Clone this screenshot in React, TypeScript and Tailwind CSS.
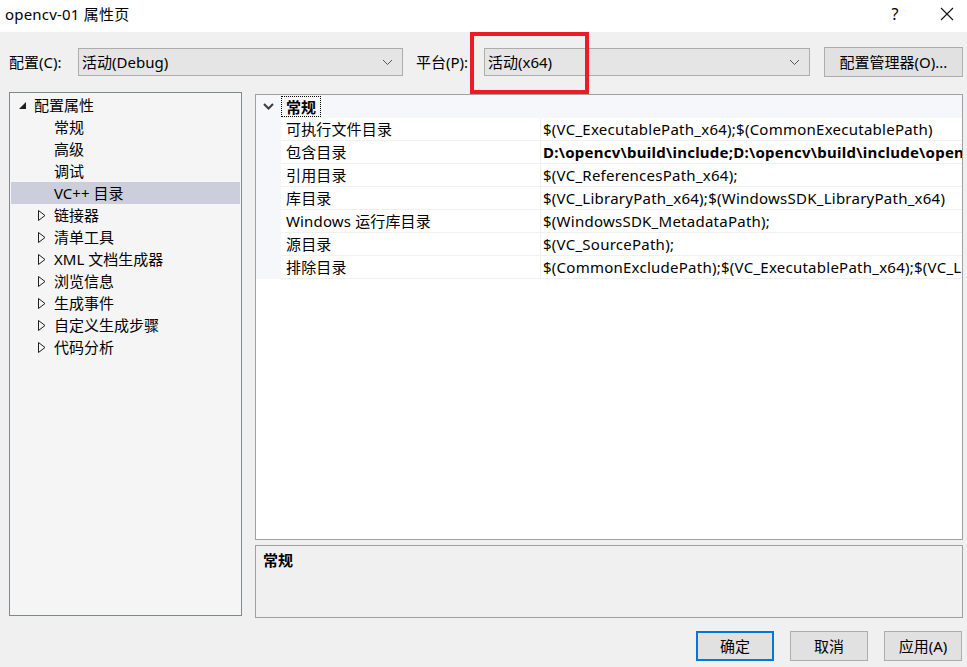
import React from 'react';

const font = "font-['Noto_Sans','Noto_Sans_CJK_SC',sans-serif]";

const treeChildren = ['常规', '高级', '调试', 'VC++ 目录'];
const treeGroups = ['链接器', '清单工具', 'XML 文档生成器', '浏览信息', '生成事件', '自定义生成步骤', '代码分析'];

const props: { name: string; value: string; bold?: boolean }[] = [
  { name: '可执行文件目录', value: '$(VC_ExecutablePath_x64);$(CommonExecutablePath)' },
  { name: '包含目录', value: 'D:\\opencv\\build\\include;D:\\opencv\\build\\include\\opencv2;$(IncludePath)', bold: true },
  { name: '引用目录', value: '$(VC_ReferencesPath_x64);' },
  { name: '库目录', value: '$(VC_LibraryPath_x64);$(WindowsSDK_LibraryPath_x64)' },
  { name: 'Windows 运行库目录', value: '$(WindowsSDK_MetadataPath);' },
  { name: '源目录', value: '$(VC_SourcePath);' },
  { name: '排除目录', value: '$(CommonExcludePath);$(VC_ExecutablePath_x64);$(VC_LibraryPath_x64)' },
];

function Chevron() {
  return (
    <svg width="11" height="7" viewBox="0 0 11 7" className="shrink-0">
      <polyline points="1,1 5.5,5.5 10,1" fill="none" stroke="#555" strokeWidth="1" />
    </svg>
  );
}

function Combo({ text, width }: { text: string; width: string }) {
  return (
    <div className={`${width} h-[28px] bg-[#e5e5e5] border border-[#adadad] flex items-center justify-between pl-[3px] pr-[9px]`}>
      <span>{text}</span>
      <Chevron />
    </div>
  );
}

function Button({ label, primary }: { label: string; primary?: boolean }) {
  return (
    <div
      className={`w-[78px] h-[30px] bg-[#e1e1e1] flex items-center justify-center ${
        primary ? 'border-2 border-[#0078d7]' : 'border border-[#adadad]'
      }`}
    >
      {label}
    </div>
  );
}

export default function App() {
  return (
    <div className={`relative w-[967px] h-[667px] bg-[#f0f0f0] text-[15px] leading-[20px] text-black overflow-hidden ${font}`}>
      {/* Title bar */}
      <div className="h-[32px] bg-white flex items-center pb-[5px]">
        <span className="pl-[5px] flex-1 tracking-[0.2px]">opencv-01 属性页</span>
        <span className="w-[20px] text-center mr-[35px] text-[16px]">?</span>
        <svg width="14" height="14" viewBox="0 0 14 14" className="mr-[13px]">
          <path d="M1 1 L13 13 M13 1 L1 13" stroke="#111" strokeWidth="1.1" />
        </svg>
      </div>

      {/* Config row */}
      <div className="h-[60px] flex items-start pt-[16px] pl-[9px]">
        <span className="h-[28px] flex items-center w-[69px]">配置(C):</span>
        <Combo text="活动(Debug)" width="w-[325px]" />
        <span className="h-[28px] flex items-center ml-[13px] w-[68px]">平台(P):</span>
        <Combo text="活动(x64)" width="w-[326px]" />
        <div className="ml-[14px] -mt-[1px] w-[139px] h-[30px] bg-[#e1e1e1] border border-[#adadad] flex items-center justify-center">
          配置管理器(O)...
        </div>
      </div>

      {/* Main */}
      <div className="flex pl-[9px] gap-[13px]">
        {/* Tree */}
        <div className="w-[233px] h-[524px] bg-[#f5f5f5] border border-[#828790] pt-[1px] pl-[1px] pr-[1px]">
          <div className="h-[22px] flex items-center">
            <svg width="7" height="7" viewBox="0 0 7 7" className="ml-[8px] mr-[8px]">
              <polygon points="7,0 7,7 0,7" fill="#1e1e1e" />
            </svg>
            <span>配置属性</span>
          </div>
          {treeChildren.map((c) => (
            <div key={c} className={`h-[22px] flex items-center pl-[43px] ${c === 'VC++ 目录' ? 'bg-[#cccedb]' : ''}`}>
              {c}
            </div>
          ))}
          {treeGroups.map((g) => (
            <div key={g} className="h-[22px] flex items-center">
              <svg width="8" height="11" viewBox="0 0 8 11" className="ml-[27px] mr-[8px]">
                <polygon points="0.5,0.5 7,5.5 0.5,10.5" fill="none" stroke="#1e1e1e" strokeWidth="1" />
              </svg>
              <span>{g}</span>
            </div>
          ))}
        </div>

        {/* Right column */}
        <div className="w-[708px] mt-[2px] flex flex-col gap-[5px]">
          <div className="h-[446px] bg-white border border-[#a0a0a0] overflow-hidden">
            <div className="h-[23px] bg-[#f5f7fa] flex items-center">
              <svg width="11" height="7" viewBox="0 0 11 7" className="ml-[7px] mr-[7px]">
                <polyline points="1,1 5.5,5.5 10,1" fill="none" stroke="#3c3c3c" strokeWidth="2" />
              </svg>
              <span className="font-bold border border-dotted border-black px-[4px] h-[21px] flex items-center">常规</span>
            </div>
            {props.map((p) => (
              <div key={p.name} className="h-[23px] flex bg-[#f5f7fa]">
                <div className="w-[25px] shrink-0" />
                <div className="w-[260px] shrink-0 bg-white border-b border-r border-[#f0f0f0] flex items-center pl-[5px] whitespace-nowrap tracking-[0.15px]">
                  {p.name}
                </div>
                <div
                  className={`flex-1 bg-white border-b border-[#f0f0f0] flex items-center pl-[2px] whitespace-nowrap overflow-hidden tracking-[0.25px] ${
                    p.bold ? 'font-bold' : ''
                  }`}
                >
                  {p.value}
                </div>
              </div>
            ))}
          </div>
          <div className="h-[73px] bg-[#f0f0f0] border border-[#a0a0a0] px-[7px] pt-[4px]">
            <span className="font-bold">常规</span>
          </div>
        </div>
      </div>

      {/* Buttons */}
      <div className="flex justify-end gap-[16px] pr-[5px] mt-[13px]">
        <Button label="确定" primary />
        <Button label="取消" />
        <Button label="应用(A)" />
      </div>

      {/* Red highlight */}
      <div className="absolute left-[470px] top-[32px] w-[119px] h-[62px] border-4 border-[#ed1c24]" />
    </div>
  );
}
